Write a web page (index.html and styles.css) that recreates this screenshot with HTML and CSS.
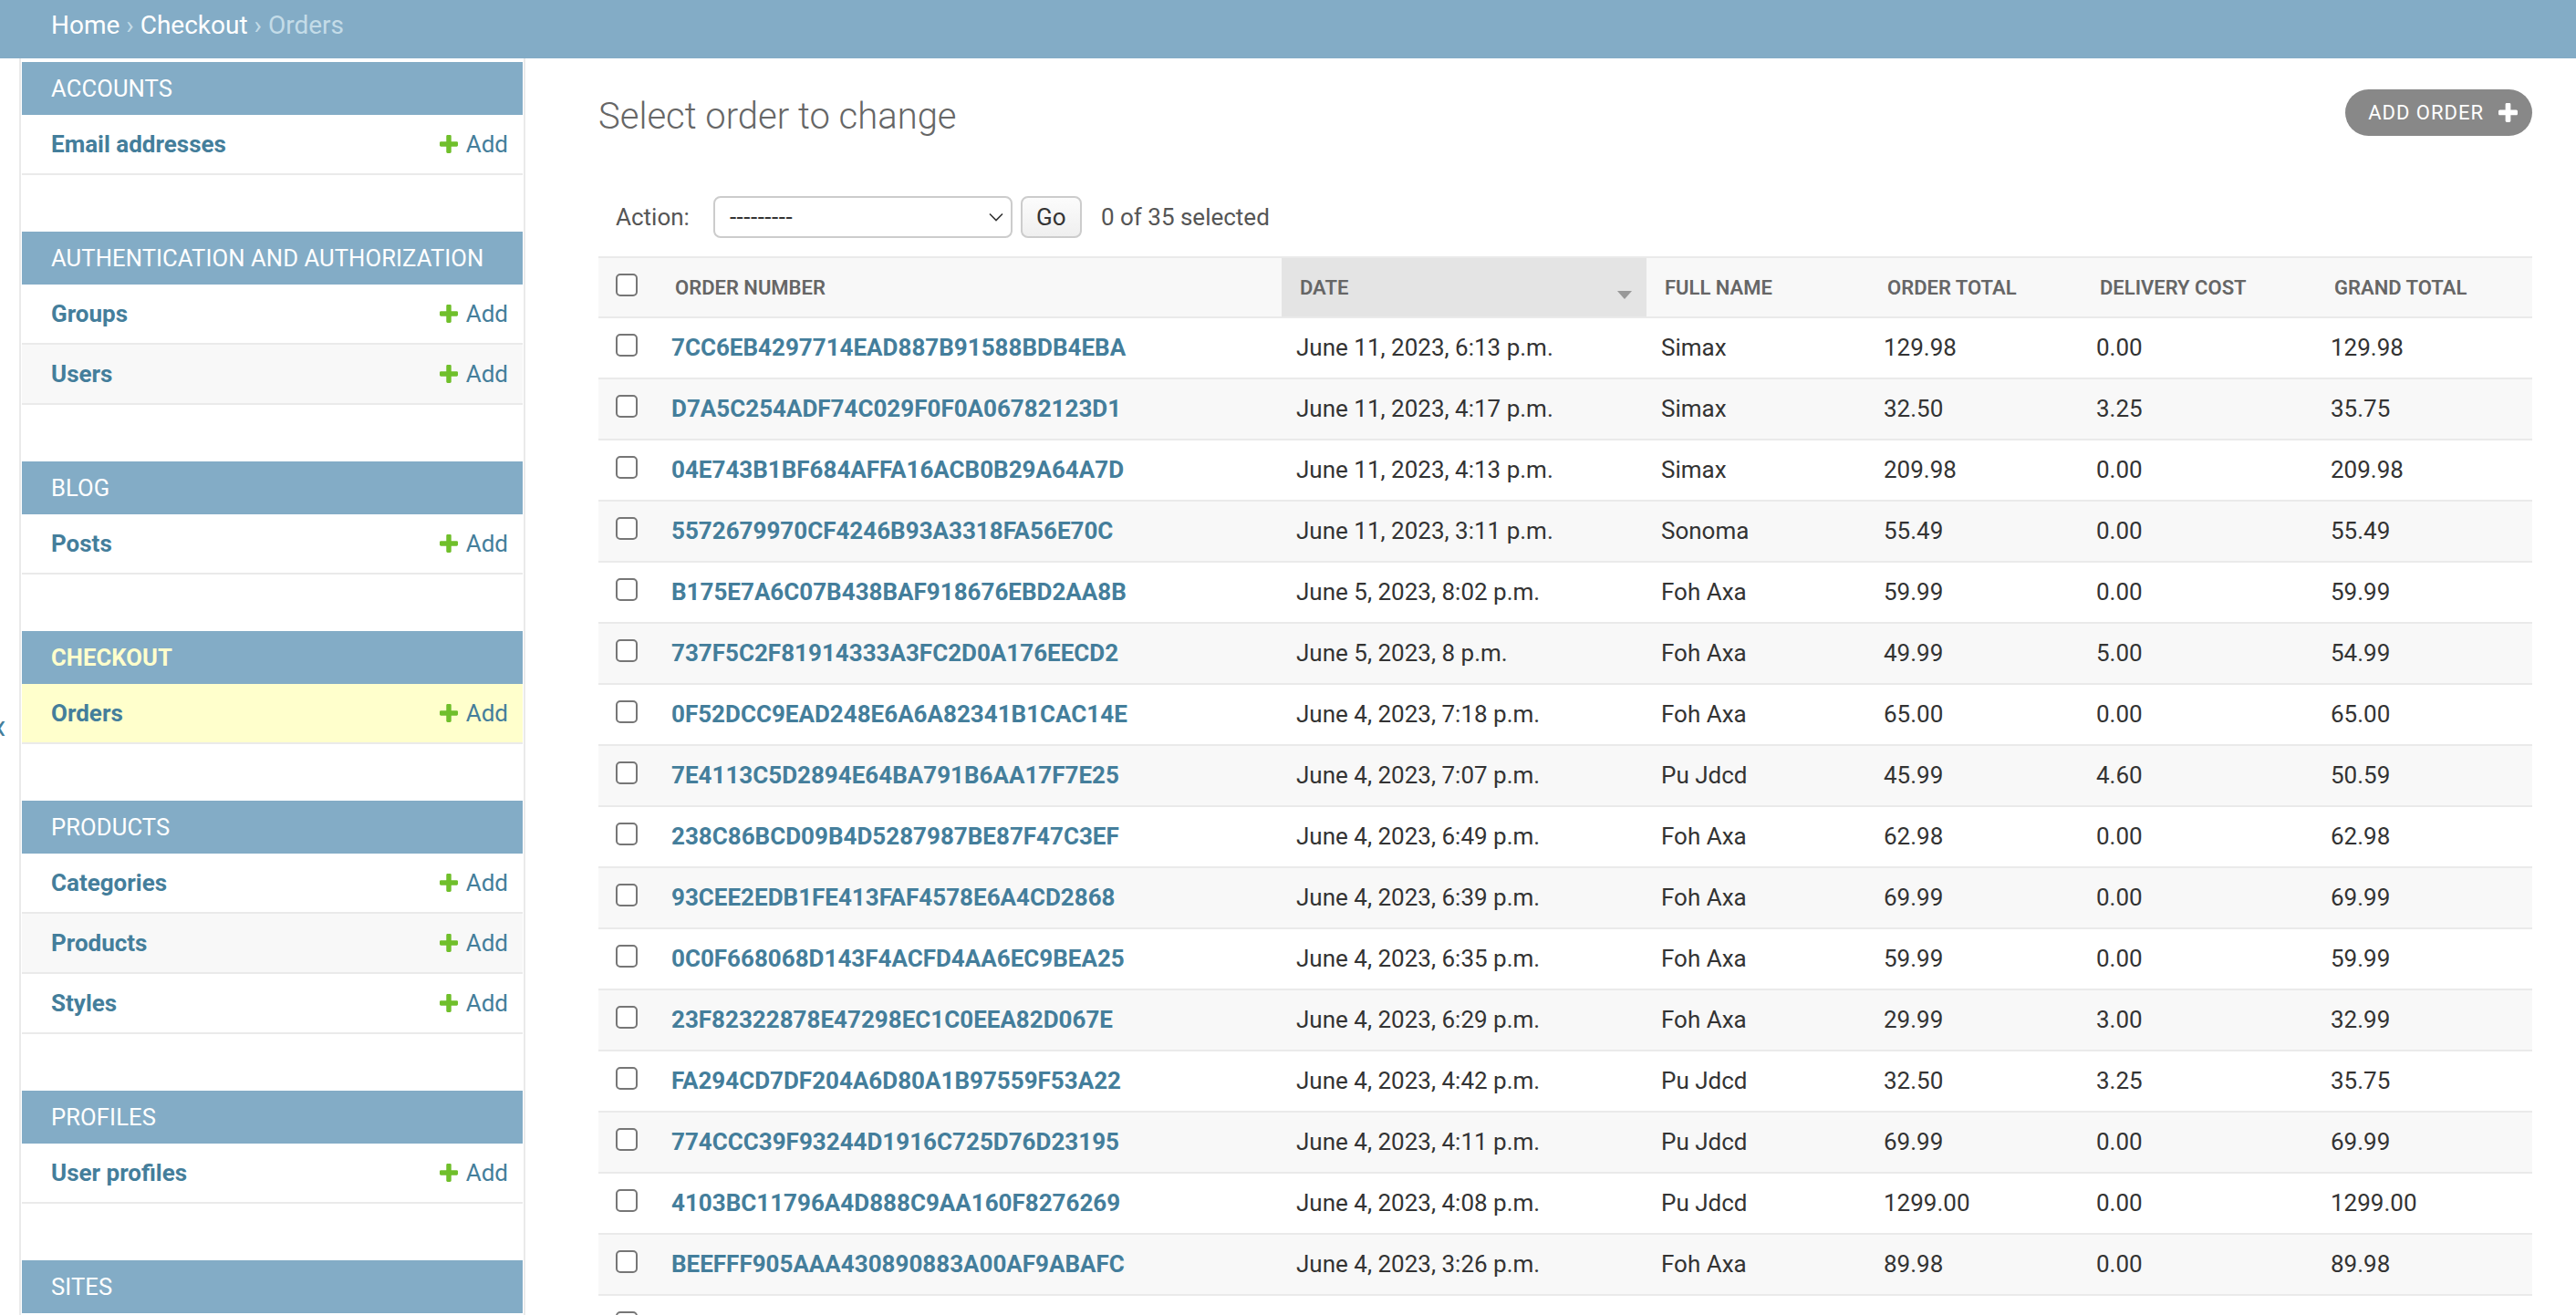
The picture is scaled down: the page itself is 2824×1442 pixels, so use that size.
FILE: index.html
```html
<!DOCTYPE html>
<html lang="en">
<head>
<meta charset="utf-8">
<title>Select order to change</title>
<link rel="stylesheet" href="styles.css">
</head>
<body>
<div class="breadcrumbs">
  <a href="#">Home</a><span class="sep"> › </span><a href="#">Checkout</a><span class="sep"> › </span><span class="current">Orders</span>
</div>
<div class="main">
  <div class="toggle"><span class="toggle-glyph">«</span></div>
  <nav class="sidebar">
    <div class="module">
      <div class="caption">Accounts</div>
      <div class="row"><a class="model" href="#">Email addresses</a><a class="addlink" href="#"><svg viewBox="192 192 1408 1408"><path d="M1600 796v192q0 40-28 68t-68 28h-416v416q0 40-28 68t-68 28h-192q-40 0-68-28t-28-68v-416h-416q-40 0-68-28t-28-68v-192q0-40 28-68t68-28h416v-416q0-40 28-68t68-28h192q40 0 68 28t28 68v416h416q40 0 68 28t28 68z"/></svg>Add</a></div>
    </div>
    <div class="module">
      <div class="caption">Authentication and Authorization</div>
      <div class="row"><a class="model" href="#">Groups</a><a class="addlink" href="#"><svg viewBox="192 192 1408 1408"><path d="M1600 796v192q0 40-28 68t-68 28h-416v416q0 40-28 68t-68 28h-192q-40 0-68-28t-28-68v-416h-416q-40 0-68-28t-28-68v-192q0-40 28-68t68-28h416v-416q0-40 28-68t68-28h192q40 0 68 28t28 68v416h416q40 0 68 28t28 68z"/></svg>Add</a></div>
      <div class="row alt"><a class="model" href="#">Users</a><a class="addlink" href="#"><svg viewBox="192 192 1408 1408"><path d="M1600 796v192q0 40-28 68t-68 28h-416v416q0 40-28 68t-68 28h-192q-40 0-68-28t-28-68v-416h-416q-40 0-68-28t-28-68v-192q0-40 28-68t68-28h416v-416q0-40 28-68t68-28h192q40 0 68 28t28 68v416h416q40 0 68 28t28 68z"/></svg>Add</a></div>
    </div>
    <div class="module">
      <div class="caption">Blog</div>
      <div class="row"><a class="model" href="#">Posts</a><a class="addlink" href="#"><svg viewBox="192 192 1408 1408"><path d="M1600 796v192q0 40-28 68t-68 28h-416v416q0 40-28 68t-68 28h-192q-40 0-68-28t-28-68v-416h-416q-40 0-68-28t-28-68v-192q0-40 28-68t68-28h416v-416q0-40 28-68t68-28h192q40 0 68 28t28 68v416h416q40 0 68 28t28 68z"/></svg>Add</a></div>
    </div>
    <div class="module">
      <div class="caption current-app">Checkout</div>
      <div class="row current-model"><a class="model" href="#">Orders</a><a class="addlink" href="#"><svg viewBox="192 192 1408 1408"><path d="M1600 796v192q0 40-28 68t-68 28h-416v416q0 40-28 68t-68 28h-192q-40 0-68-28t-28-68v-416h-416q-40 0-68-28t-28-68v-192q0-40 28-68t68-28h416v-416q0-40 28-68t68-28h192q40 0 68 28t28 68v416h416q40 0 68 28t28 68z"/></svg>Add</a></div>
    </div>
    <div class="module">
      <div class="caption">Products</div>
      <div class="row"><a class="model" href="#">Categories</a><a class="addlink" href="#"><svg viewBox="192 192 1408 1408"><path d="M1600 796v192q0 40-28 68t-68 28h-416v416q0 40-28 68t-68 28h-192q-40 0-68-28t-28-68v-416h-416q-40 0-68-28t-28-68v-192q0-40 28-68t68-28h416v-416q0-40 28-68t68-28h192q40 0 68 28t28 68v416h416q40 0 68 28t28 68z"/></svg>Add</a></div>
      <div class="row alt"><a class="model" href="#">Products</a><a class="addlink" href="#"><svg viewBox="192 192 1408 1408"><path d="M1600 796v192q0 40-28 68t-68 28h-416v416q0 40-28 68t-68 28h-192q-40 0-68-28t-28-68v-416h-416q-40 0-68-28t-28-68v-192q0-40 28-68t68-28h416v-416q0-40 28-68t68-28h192q40 0 68 28t28 68v416h416q40 0 68 28t28 68z"/></svg>Add</a></div>
      <div class="row"><a class="model" href="#">Styles</a><a class="addlink" href="#"><svg viewBox="192 192 1408 1408"><path d="M1600 796v192q0 40-28 68t-68 28h-416v416q0 40-28 68t-68 28h-192q-40 0-68-28t-28-68v-416h-416q-40 0-68-28t-28-68v-192q0-40 28-68t68-28h416v-416q0-40 28-68t68-28h192q40 0 68 28t28 68v416h416q40 0 68 28t28 68z"/></svg>Add</a></div>
    </div>
    <div class="module">
      <div class="caption">Profiles</div>
      <div class="row"><a class="model" href="#">User profiles</a><a class="addlink" href="#"><svg viewBox="192 192 1408 1408"><path d="M1600 796v192q0 40-28 68t-68 28h-416v416q0 40-28 68t-68 28h-192q-40 0-68-28t-28-68v-416h-416q-40 0-68-28t-28-68v-192q0-40 28-68t68-28h416v-416q0-40 28-68t68-28h192q40 0 68 28t28 68v416h416q40 0 68 28t28 68z"/></svg>Add</a></div>
    </div>
    <div class="module">
      <div class="caption">Sites</div>
    </div>
  </nav>
  <div class="content">
    <div class="content-head">
      <h1>Select order to change</h1>
      <a class="object-tool" href="#">Add order<svg viewBox="192 192 1408 1408"><path d="M1600 796v192q0 40-28 68t-68 28h-416v416q0 40-28 68t-68 28h-192q-40 0-68-28t-28-68v-416h-416q-40 0-68-28t-28-68v-192q0-40 28-68t68-28h416v-416q0-40 28-68t68-28h192q40 0 68 28t28 68v416h416q40 0 68 28t28 68z"/></svg></a>
    </div>
    <div class="actions">
      <span class="label">Action:</span>
      <div class="select"><span>---------</span><svg class="chev" viewBox="0 0 16 10"><path d="M1 1.5 L8 8.5 L15 1.5" /></svg></div>
      <button class="go">Go</button>
      <span class="counter">0 of 35 selected</span>
    </div>
    <table class="results">
      <colgroup>
        <col class="c-check"><col class="c-num"><col class="c-date"><col class="c-name"><col class="c-total"><col class="c-deliv"><col class="c-grand">
      </colgroup>
      <thead>
        <tr>
          <th><span class="cb"></span></th>
          <th>Order number</th>
          <th class="sorted"><div class="sort-wrap"><span>Date</span><span class="sort-arrow"></span></div></th>
          <th>Full name</th>
          <th>Order total</th>
          <th>Delivery cost</th>
          <th>Grand total</th>
        </tr>
      </thead>
      <tbody>
        <tr><td><span class="cb"></span></td><td><a href="#">7CC6EB4297714EAD887B91588BDB4EBA</a></td><td>June 11, 2023, 6:13 p.m.</td><td>Simax</td><td>129.98</td><td>0.00</td><td>129.98</td></tr>
        <tr><td><span class="cb"></span></td><td><a href="#">D7A5C254ADF74C029F0F0A06782123D1</a></td><td>June 11, 2023, 4:17 p.m.</td><td>Simax</td><td>32.50</td><td>3.25</td><td>35.75</td></tr>
        <tr><td><span class="cb"></span></td><td><a href="#">04E743B1BF684AFFA16ACB0B29A64A7D</a></td><td>June 11, 2023, 4:13 p.m.</td><td>Simax</td><td>209.98</td><td>0.00</td><td>209.98</td></tr>
        <tr><td><span class="cb"></span></td><td><a href="#">5572679970CF4246B93A3318FA56E70C</a></td><td>June 11, 2023, 3:11 p.m.</td><td>Sonoma</td><td>55.49</td><td>0.00</td><td>55.49</td></tr>
        <tr><td><span class="cb"></span></td><td><a href="#">B175E7A6C07B438BAF918676EBD2AA8B</a></td><td>June 5, 2023, 8:02 p.m.</td><td>Foh Axa</td><td>59.99</td><td>0.00</td><td>59.99</td></tr>
        <tr><td><span class="cb"></span></td><td><a href="#">737F5C2F81914333A3FC2D0A176EECD2</a></td><td>June 5, 2023, 8 p.m.</td><td>Foh Axa</td><td>49.99</td><td>5.00</td><td>54.99</td></tr>
        <tr><td><span class="cb"></span></td><td><a href="#">0F52DCC9EAD248E6A6A82341B1CAC14E</a></td><td>June 4, 2023, 7:18 p.m.</td><td>Foh Axa</td><td>65.00</td><td>0.00</td><td>65.00</td></tr>
        <tr><td><span class="cb"></span></td><td><a href="#">7E4113C5D2894E64BA791B6AA17F7E25</a></td><td>June 4, 2023, 7:07 p.m.</td><td>Pu Jdcd</td><td>45.99</td><td>4.60</td><td>50.59</td></tr>
        <tr><td><span class="cb"></span></td><td><a href="#">238C86BCD09B4D5287987BE87F47C3EF</a></td><td>June 4, 2023, 6:49 p.m.</td><td>Foh Axa</td><td>62.98</td><td>0.00</td><td>62.98</td></tr>
        <tr><td><span class="cb"></span></td><td><a href="#">93CEE2EDB1FE413FAF4578E6A4CD2868</a></td><td>June 4, 2023, 6:39 p.m.</td><td>Foh Axa</td><td>69.99</td><td>0.00</td><td>69.99</td></tr>
        <tr><td><span class="cb"></span></td><td><a href="#">0C0F668068D143F4ACFD4AA6EC9BEA25</a></td><td>June 4, 2023, 6:35 p.m.</td><td>Foh Axa</td><td>59.99</td><td>0.00</td><td>59.99</td></tr>
        <tr><td><span class="cb"></span></td><td><a href="#">23F82322878E47298EC1C0EEA82D067E</a></td><td>June 4, 2023, 6:29 p.m.</td><td>Foh Axa</td><td>29.99</td><td>3.00</td><td>32.99</td></tr>
        <tr><td><span class="cb"></span></td><td><a href="#">FA294CD7DF204A6D80A1B97559F53A22</a></td><td>June 4, 2023, 4:42 p.m.</td><td>Pu Jdcd</td><td>32.50</td><td>3.25</td><td>35.75</td></tr>
        <tr><td><span class="cb"></span></td><td><a href="#">774CCC39F93244D1916C725D76D23195</a></td><td>June 4, 2023, 4:11 p.m.</td><td>Pu Jdcd</td><td>69.99</td><td>0.00</td><td>69.99</td></tr>
        <tr><td><span class="cb"></span></td><td><a href="#">4103BC11796A4D888C9AA160F8276269</a></td><td>June 4, 2023, 4:08 p.m.</td><td>Pu Jdcd</td><td>1299.00</td><td>0.00</td><td>1299.00</td></tr>
        <tr><td><span class="cb"></span></td><td><a href="#">BEEFFF905AAA430890883A00AF9ABAFC</a></td><td>June 4, 2023, 3:26 p.m.</td><td>Foh Axa</td><td>89.98</td><td>0.00</td><td>89.98</td></tr>
        <tr><td><span class="cb"></span></td><td></td><td></td><td></td><td></td><td></td><td></td></tr>
      </tbody>
    </table>
  </div>
</div>
</body>
</html>
```

FILE: styles.css
```css
html {
  overflow: hidden;
}
body {
  margin: 0;
  font-family: Roboto, "Liberation Sans", sans-serif;
  color: #333;
  background: #fff;
}
a {
  text-decoration: none;
  color: #447e9b;
}

/* breadcrumbs */
.breadcrumbs {
  height: 64px;
  box-sizing: border-box;
  padding: 8px 56px 16px;
  line-height: 40px;
  font-size: 28px;
  background: #83acc6;
  color: #c4dce8;
  white-space: nowrap;
}
.breadcrumbs a {
  color: #fff;
}
.breadcrumbs .sep,
.breadcrumbs .current {
  color: #c4dce8;
}

/* main layout */
.main {
  display: flex;
  align-items: flex-start;
}
.toggle {
  flex: 0 0 21px;
  width: 21px;
  align-self: stretch;
  min-height: 1400px;
  border-right: 2px solid #eaeaea;
  margin-right: 1px;
  overflow: hidden;
  display: flex;
  justify-content: flex-end;
  align-items: flex-start;
}
.toggle .toggle-glyph {
  flex: none;
  margin-right: 14px;
  padding-top: 713px;
  font-size: 40px;
  line-height: 40px;
  color: #447e9b;
}

/* sidebar */
.sidebar {
  flex: 0 0 549px;
  width: 549px;
  padding-top: 4px;
  padding-right: 1px;
  border-right: 2px solid #eaeaea;
  align-self: stretch;
}
.module {
  margin-bottom: 62px;
}
.caption {
  height: 58px;
  line-height: 58px;
  padding-left: 32px;
  background: #83acc6;
  color: #fff;
  font-size: 25.6px;
  text-transform: uppercase;
  letter-spacing: 0.1px;
  white-space: nowrap;
}
.caption.current-app {
  color: #ffc;
  font-weight: 700;
}
.row {
  display: flex;
  justify-content: space-between;
  align-items: center;
  padding: 15px 16px 15px 32px;
  line-height: 34px;
  border-bottom: 2px solid #eaeaea;
  font-size: 26px;
  background: #fff;
}
.row.alt {
  background: #f8f8f8;
}
.row.current-model {
  background: #ffc;
}
.row .model {
  font-weight: 700;
}
.addlink {
  display: flex;
  align-items: center;
  gap: 9px;
}
.addlink svg {
  width: 20px;
  height: 20px;
  fill: #70bf2b;
}

/* content */
.content {
  flex: 1;
  min-width: 0;
  padding: 40px 48px 0 80px;
}
.content-head {
  display: flex;
  justify-content: space-between;
  align-items: flex-start;
}
h1 {
  margin: 0;
  font-size: 40px;
  line-height: 48px;
  font-weight: 300;
  color: #666;
}
.object-tool {
  display: flex;
  align-items: center;
  margin-top: -6px;
  height: 51px;
  padding: 0 16px 0 25px;
  border-radius: 26px;
  background: #888;
  color: #fff;
  font-size: 22px;
  text-transform: uppercase;
  letter-spacing: 1px;
  gap: 16px;
}
.object-tool svg {
  width: 21px;
  height: 21px;
  fill: #fff;
}

.actions {
  display: flex;
  align-items: center;
  margin-top: 63px;
  padding: 0 19px;
  height: 46px;
  font-size: 26px;
  color: #555;
}
.actions .label {
  margin-right: 26px;
}
.select {
  width: 328px;
  height: 46px;
  box-sizing: border-box;
  border: 2px solid #ccc;
  border-radius: 8px;
  display: flex;
  align-items: center;
  justify-content: space-between;
  padding: 0 8px 0 16px;
  font-size: 26px;
  letter-spacing: 0.5px;
  color: #333;
  background: #fff;
}
.select .chev {
  width: 16px;
  height: 10px;
  fill: none;
  stroke: #333;
  stroke-width: 1.6;
}
.go {
  margin-left: 9px;
  height: 46px;
  width: 67px;
  border: 2px solid #ccc;
  border-radius: 8px;
  background: linear-gradient(#fcfcfc, #efefef);
  font-family: Roboto, "Liberation Sans", sans-serif;
  font-size: 26px;
  color: #333;
  padding: 0;
}
.counter {
  margin-left: 21px;
  color: #555;
}

/* results table */
.results {
  margin-top: 20px;
  width: 100%;
  table-layout: fixed;
  border-collapse: separate;
  border-spacing: 0;
  font-size: 26px;
}
.c-check { width: 64px; }
.c-num { width: 685px; }
.c-date { width: 400px; }
.c-name { width: 244px; }
.c-total { width: 233px; }
.c-deliv { width: 257px; }
.c-grand { width: auto; }

.results th {
  text-align: left;
  background: #f8f8f8;
  border-top: 2px solid #eaeaea;
  border-bottom: 2px solid #eaeaea;
  padding: 4px 16px 1px 20px;
  line-height: 58px;
  font-size: 22px;
  font-weight: 600;
  color: #666;
  text-transform: uppercase;
  vertical-align: top;
  white-space: nowrap;
}
.results th.sorted {
  background: #e4e4e4;
}
.sort-wrap {
  display: flex;
  justify-content: space-between;
  align-items: center;
}
.sort-arrow {
  width: 0;
  height: 0;
  border-left: 8px solid transparent;
  border-right: 8px solid transparent;
  border-top: 9px solid #999;
  margin-top: 14px;
}
.results td {
  padding: 16px;
  line-height: 33px;
  border-bottom: 2px solid #eaeaea;
  vertical-align: top;
  white-space: nowrap;
  color: #333;
}
.results tbody tr:nth-child(even) td {
  background: #f8f8f8;
}
.results td a {
  font-weight: 700;
}
.results td:first-child,
.results th:first-child {
  padding-left: 19px;
  padding-right: 0;
}
.results th:first-child {
  padding-top: 17px;
  line-height: 0;
  height: 46px;
  box-sizing: content-box;
}
.cb {
  display: block;
  width: 24px;
  height: 25px;
  box-sizing: border-box;
  border: 2px solid #767676;
  border-radius: 5px;
  background: #fff;
  margin-top: 1px;
}
.results th .cb {
  margin-top: 0;
}
```
